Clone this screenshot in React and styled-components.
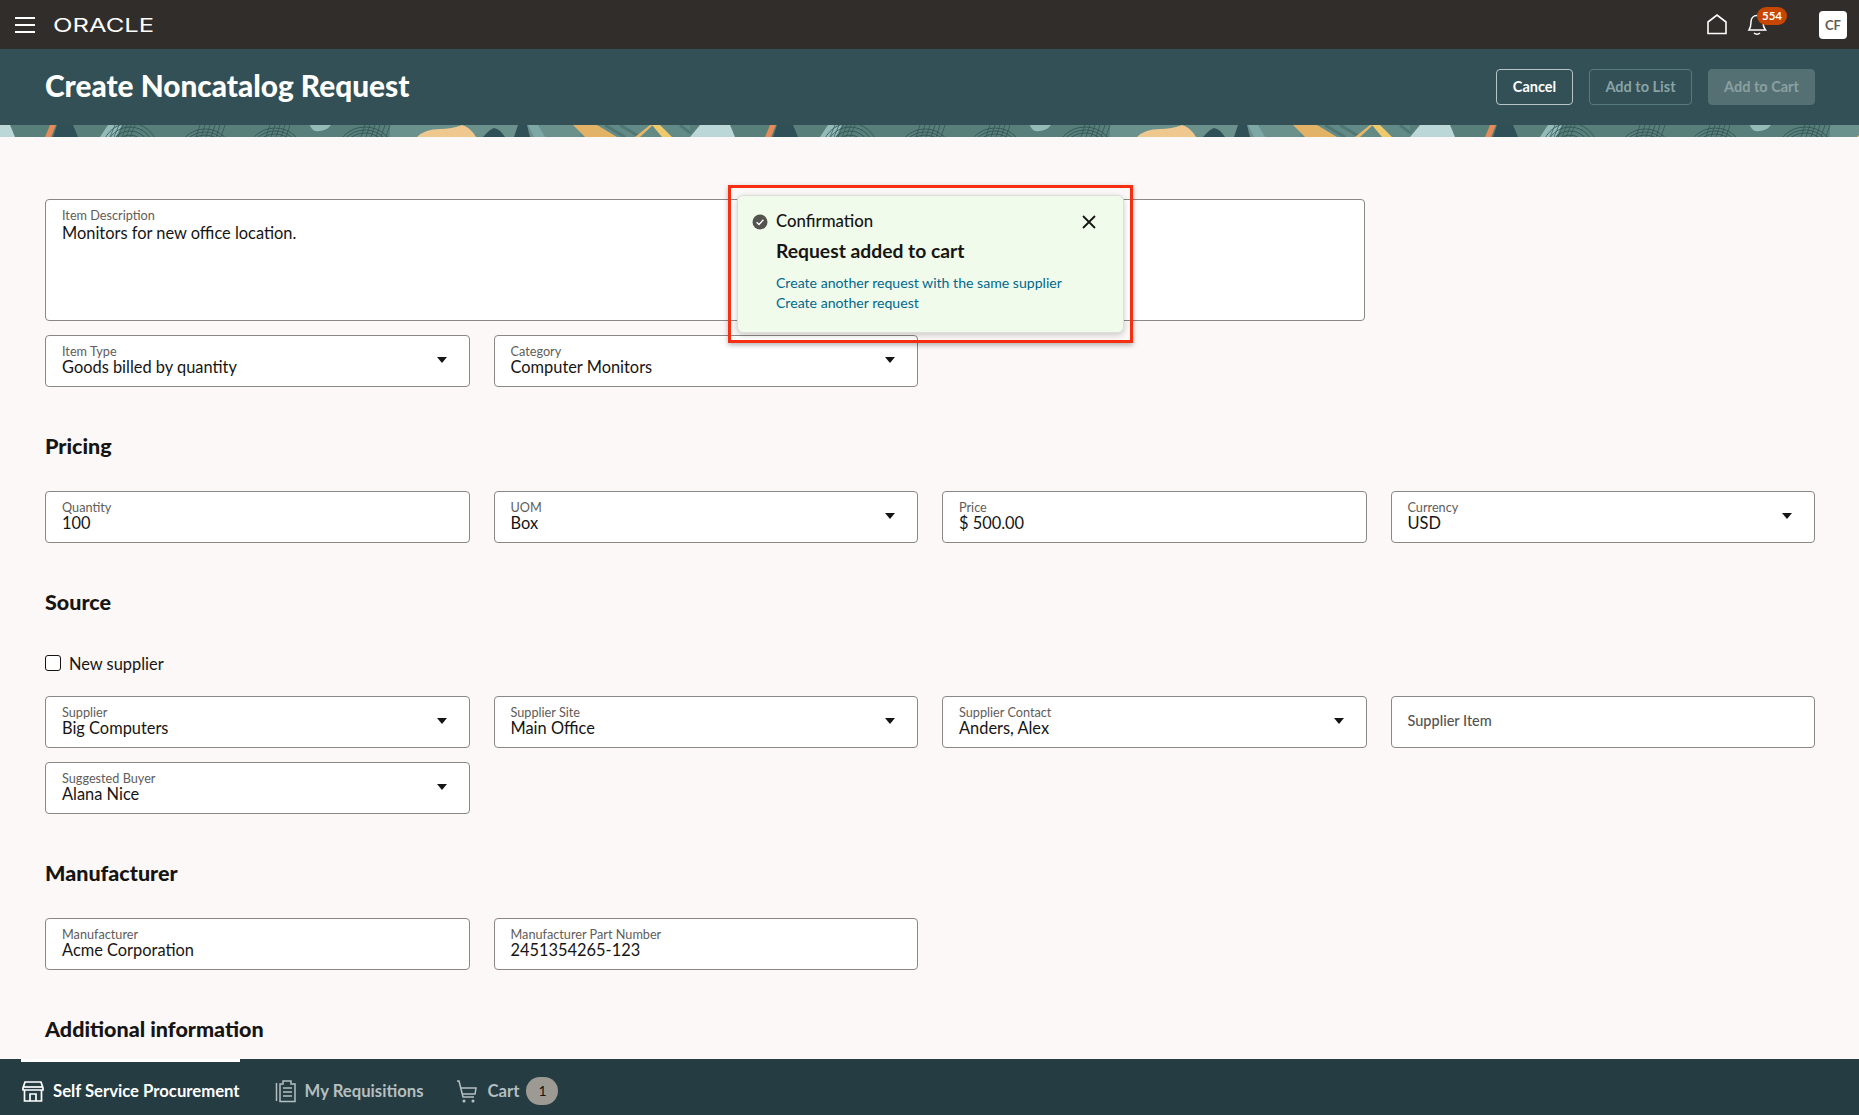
import React from 'react';
import styled, { createGlobalStyle } from 'styled-components';

const GlobalStyle = createGlobalStyle`
    html, body {
        margin: 0;
        padding: 0;
        height: 100%;
        background: #fcf8f7;
    }
    * {
        box-sizing: border-box;
    }
    body {
        font-family: 'Lato', 'Noto Sans', sans-serif;
        color: #161513;
    }
`;

const Page = styled.div`
    position: relative;
    display: flex;
    flex-direction: column;
    height: 100vh;
    overflow: hidden;
`;

const TopBar = styled.header`
    display: flex;
    align-items: center;
    justify-content: space-between;
    flex: none;
    height: 49px;
    padding: 0 12px 0 15px;
    background: #312d2a;
`;

const TopLeft = styled.div`
    display: flex;
    align-items: center;
    gap: 18px;
`;

const TopRight = styled.div`
    display: flex;
    align-items: center;
`;

const Hamburger = styled.div`
    display: flex;
    flex-direction: column;
    gap: 5px;
    width: 20px;

    span {
        display: block;
        height: 2px;
        background: #fff;
    }
`;

const Logo = styled.span`
    display: inline-block;
    width: 100px;
    font-family: 'Inter', sans-serif;
    font-size: 18.5px;
    font-weight: 400;
    line-height: 18px;
    color: #fff;
    transform: scaleX(1.38);
    transform-origin: left center;
`;

const IconBox = styled.div`
    position: relative;
    display: flex;
    align-items: center;
    justify-content: center;
    width: 24px;
    height: 24px;
    margin-top: -2px;
    margin-right: ${(p) => p.$gap}px;
`;

const Badge = styled.span`
    position: absolute;
    top: -5px;
    left: 12px;
    width: 30px;
    height: 18px;
    border-radius: 9px;
    background: #c74600;
    color: #fff;
    font-size: 11.5px;
    font-weight: 700;
    line-height: 18px;
    text-align: center;
`;

const Avatar = styled.div`
    width: 28px;
    height: 28px;
    border-radius: 4px;
    background: #fff;
    color: #5f5b57;
    font-size: 13px;
    font-weight: 700;
    line-height: 28px;
    text-align: center;
`;

const TitleBar = styled.div`
    display: flex;
    align-items: center;
    justify-content: space-between;
    flex: none;
    height: 76px;
    padding: 0 44px 0 45px;
    background: #325056;
`;

const Title = styled.h1`
    margin: 0 0 3px;
    font-size: 29.8px;
    font-weight: 900;
    color: #fff;
`;

const Actions = styled.div`
    display: flex;
    gap: 16px;
`;

const ActionButton = styled.button`
    height: 36px;
    padding: 0 0 2px;
    width: ${(p) => p.$width}px;
    border-radius: 4px;
    border: 1px solid ${(p) => p.$border};
    background: ${(p) => p.$bg};
    color: ${(p) => p.$color};
    font-family: inherit;
    font-size: 14.5px;
    font-weight: 700;
`;

const BannerArt = styled.svg`
    display: block;
    flex: none;
    width: 100%;
    height: 12px;
`;

const Main = styled.main`
    flex: 1;
    min-height: 0;
    overflow: hidden;
    padding: 62px 44px 0 45px;
`;

const FieldGrid = styled.div`
    display: grid;
    grid-template-columns: repeat(4, minmax(0, 1fr));
    gap: 14px 24px;
`;

const FieldBox = styled.div`
    position: relative;
    grid-column: span ${(p) => p.$span || 1};
    height: ${(p) => p.$height || 52}px;
    margin-right: ${(p) => (p.$span ? 2 : 0)}px;
    padding: 9px 16px 0;
    border: 1px solid #8a8785;
    border-radius: 4px;
    background: #fff;
`;

const FieldLabel = styled.div`
    font-size: 12.7px;
    line-height: 13px;
    color: #5f5c59;
`;

const FieldValue = styled.div`
    margin-top: ${(p) => p.$gap || 0}px;
    font-size: 16.4px;
    line-height: 18px;
    color: #161513;
`;

const EmptyLabel = styled.div`
    font-size: 14.5px;
    font-weight: 500;
    line-height: 30px;
    color: #55524f;
`;

const Caret = styled.span`
    position: absolute;
    top: 21px;
    right: 22px;
    width: 0;
    height: 0;
    border-left: 5.5px solid transparent;
    border-right: 5.5px solid transparent;
    border-top: 6px solid #161513;
`;

const SectionTitle = styled.h2`
    margin: 47px 0 ${(p) => (p.$tight ? 0 : 33)}px;
    font-size: 21.5px;
    font-weight: 900;
    line-height: 24px;
`;

const CheckRow = styled.label`
    display: flex;
    align-items: center;
    gap: 8px;
    height: 20px;
    margin: 39px 0 23px;
    font-size: 16.4px;
`;

const CheckBox = styled.span`
    width: 16px;
    height: 16px;
    border: 1.5px solid #161513;
    border-radius: 3px;
    background: #fff;
`;

const BottomBar = styled.nav`
    position: relative;
    display: flex;
    align-items: center;
    flex: none;
    height: 56px;
    padding: 8px 0 0 21px;
    background: #253c42;
`;

const Tab = styled.div`
    position: relative;
    display: flex;
    align-items: center;
    gap: 8px;
    margin-right: ${(p) => p.$gap}px;
    font-size: 16.7px;
    font-weight: 700;
    color: ${(p) => (p.$active ? '#fff' : '#b5bfc0')};

    &::before {
        content: ${(p) => (p.$active ? "''" : 'none')};
        position: absolute;
        top: -20px;
        left: 0;
        right: 0;
        height: 3px;
        background: #fff;
    }
`;

const CartCount = styled.span`
    width: 32px;
    height: 28px;
    margin-left: -1px;
    border-radius: 14px;
    background: #9c9a93;
    color: #161513;
    font-size: 14px;
    font-weight: 400;
    line-height: 28px;
    text-align: center;
`;

const RedFrame = styled.div`
    position: absolute;
    top: 185px;
    left: 728px;
    width: 405px;
    height: 158px;
    padding: 7px 6px;
    border: 3px solid #f62e12;
    box-shadow: 0 2px 5px rgba(0, 0, 0, 0.3);
`;

const Toast = styled.div`
    position: relative;
    height: 100%;
    padding: 16px 0 0 38px;
    border: 1px solid #dcdfd8;
    border-radius: 6px;
    background: #f1fbeb;
    box-shadow: 0 2px 6px rgba(0, 0, 0, 0.2);
`;

const ToastIcon = styled.svg`
    position: absolute;
    top: 18px;
    left: 14px;
    width: 16px;
    height: 16px;
`;

const ToastClose = styled.svg`
    position: absolute;
    top: 18px;
    right: 26px;
    width: 16px;
    height: 16px;
`;

const ToastKind = styled.div`
    font-size: 16.8px;
    font-weight: 500;
    line-height: 18px;
`;

const ToastTitle = styled.div`
    margin: 10px 0 11px;
    font-size: 19.3px;
    font-weight: 700;
    line-height: 22px;
`;

const ToastLink = styled.a`
    display: block;
    color: #00688c;
    font-size: 14.1px;
    line-height: 20px;
`;

const Field = ({ label, value, select, span, height, valueGap }) => (
    <FieldBox $span={span} $height={height}>
        {value ? (
            <>
                <FieldLabel>{label}</FieldLabel>
                <FieldValue $gap={valueGap}>{value}</FieldValue>
            </>
        ) : (
            <EmptyLabel>{label}</EmptyLabel>
        )}
        {select && <Caret />}
    </FieldBox>
);

const Banner = () => (
    <BannerArt aria-hidden="true">
        <defs>
            <pattern id="art" width="720" height="12" patternUnits="userSpaceOnUse">
                <rect width="720" height="12" fill="#587f79" />
                <rect x="390" width="190" height="12" fill="#6a918c" />
                <rect x="580" width="110" height="12" fill="#628a86" />
                <polygon points="0,0 10,0 15,12 0,12" fill="#bcd7d8" />
                <polygon points="700,0 720,0 720,12 690,12" fill="#bcd7d8" />
                <polygon points="50,0 56,0 51,12 45,12" fill="#e58b57" />
                <polygon points="57,0 73,0 78,12 53,12" fill="#2f5057" />
                <polygon points="108,0 122,0 116,12 100,12" fill="#93bcb9" />
                <path d="M310 0 H331 Q326 7 315 6 Q311 4 310 0Z" fill="#93bcb9" />
                <g fill="none" stroke="#2e4f51" strokeWidth="0.8">
                    <circle cx="130" cy="26" r="16" />
                    <circle cx="130" cy="26" r="20" />
                    <circle cx="130" cy="26" r="24" />
                    <circle cx="130" cy="26" r="28" />
                    <circle cx="205" cy="32" r="22" />
                    <circle cx="205" cy="32" r="25" />
                    <circle cx="205" cy="32" r="28" />
                    <circle cx="275" cy="32" r="23" />
                    <circle cx="275" cy="32" r="26" />
                    <circle cx="275" cy="32" r="29" />
                    <circle cx="365" cy="32" r="24" />
                    <circle cx="365" cy="32" r="27" />
                    <circle cx="365" cy="32" r="30" />
                </g>
                <g stroke="#2e4f51" strokeWidth="0.7">
                    <path d="M115 0 L110 12 M119 0 L114 12 M123 0 L118 12 M127 0 L122 12 M131 0 L126 12 M135 0 L130 12" />
                    <path d="M200 0 L196 12 M205 0 L201 12 M210 0 L206 12 M215 0 L211 12 M220 0 L216 12 M225 0 L221 12" />
                    <path d="M270 0 L266 12 M275 0 L271 12 M280 0 L276 12 M285 0 L281 12 M290 0 L286 12" />
                    <path d="M365 0 L361 12 M370 0 L366 12 M375 0 L371 12 M380 0 L376 12 M385 0 L381 12 M390 0 L386 12" />
                </g>
                <path d="M417 12 Q425 4 440 4 Q452 4 462 0 Q470 2 476 12Z" fill="#efc88f" />
                <path d="M483 12 Q490 4 494 3 Q500 4 505 12Z" fill="#2f5057" />
                <polygon points="518,0 527,0 530,12 514,12" fill="#2f5057" />
                <polygon points="528,0 538,0 545,12 534,12" fill="#7ea8a6" />
                <polygon points="573,0 597,0 617,12 585,12" fill="#e2b266" />
                <path d="M605 0 L625 12 M620 0 L640 12 M680 0 L690 8" stroke="#4f7773" strokeWidth="3" />
                <polygon points="650,0 653,0 640,12 635,12" fill="#e8b566" />
                <polygon points="652,0 660,0 672,12 662,12" fill="#f0c96a" />
            </pattern>
        </defs>
        <rect width="100%" height="12" fill="url(#art)" />
    </BannerArt>
);

const App = () => (
    <Page>
        <GlobalStyle />
        <TopBar>
            <TopLeft>
                <Hamburger>
                    <span />
                    <span />
                    <span />
                </Hamburger>
                <Logo>ORACLE</Logo>
            </TopLeft>
            <TopRight>
                <IconBox $gap={16}>
                    <svg width="22" height="22" viewBox="0 0 22 22" fill="none" stroke="#fff" strokeWidth="1.6">
                        <path d="M2 20.5 V9 L11 2 L20 9 V20.5 Z" />
                    </svg>
                </IconBox>
                <IconBox $gap={50}>
                    <svg width="22" height="24" viewBox="0 0 22 24" fill="none" stroke="#fff" strokeWidth="1.5">
                        <path d="M3 18 C5 15 5 13 5 10 C5 6 7.5 3.5 11 3.5 C14.5 3.5 17 6 17 10 C17 13 17 15 19.5 18 Z" />
                        <path d="M8 21 C9.5 22.5 12.5 22.5 14 21" />
                    </svg>
                    <Badge>554</Badge>
                </IconBox>
                <Avatar>CF</Avatar>
            </TopRight>
        </TopBar>
        <TitleBar>
            <Title>Create Noncatalog Request</Title>
            <Actions>
                <ActionButton $width={77} $border="#b9c5c5" $bg="transparent" $color="#fff">Cancel</ActionButton>
                <ActionButton $width={103} $border="#567a7b" $bg="transparent" $color="#8aa3a4">Add to List</ActionButton>
                <ActionButton $width={107} $border="#557073" $bg="#557073" $color="#8ba0a2">Add to Cart</ActionButton>
            </Actions>
        </TitleBar>
        <Banner />
        <Main>
            <FieldGrid>
                <Field label="Item Description" value="Monitors for new office location." span={3} height={122} valueGap={2} />
                <div />
                <Field label="Item Type" value="Goods billed by quantity" select />
                <Field label="Category" value="Computer Monitors" select />
            </FieldGrid>

            <SectionTitle>Pricing</SectionTitle>
            <FieldGrid>
                <Field label="Quantity" value="100" />
                <Field label="UOM" value="Box" select />
                <Field label="Price" value="$ 500.00" />
                <Field label="Currency" value="USD" select />
            </FieldGrid>

            <SectionTitle $tight>Source</SectionTitle>
            <CheckRow>
                <CheckBox />
                New supplier
            </CheckRow>
            <FieldGrid>
                <Field label="Supplier" value="Big Computers" select />
                <Field label="Supplier Site" value="Main Office" select />
                <Field label="Supplier Contact" value="Anders, Alex" select />
                <Field label="Supplier Item" />
                <Field label="Suggested Buyer" value="Alana Nice" select />
            </FieldGrid>

            <SectionTitle>Manufacturer</SectionTitle>
            <FieldGrid>
                <Field label="Manufacturer" value="Acme Corporation" />
                <Field label="Manufacturer Part Number" value="2451354265-123" />
            </FieldGrid>

            <SectionTitle>Additional information</SectionTitle>
        </Main>
        <BottomBar>
            <Tab $active $gap={35}>
                <svg width="24" height="24" viewBox="0 0 24 24" fill="none" stroke="#fff" strokeWidth="1.7">
                    <path d="M4 3 H20 L22 9 V11 H2 V9 Z" />
                    <path d="M2 8 H22" />
                    <path d="M3.5 11 V22 H20.5 V11" />
                    <path d="M9 22 V15 H15 V22" />
                </svg>
                Self Service Procurement
            </Tab>
            <Tab $gap={32}>
                <svg width="22" height="24" viewBox="0 0 22 24" fill="none" stroke="#b5bfc0" strokeWidth="1.5">
                    <path d="M1.5 4 V22" />
                    <path d="M5 5 H8 V2 H16 V5 H20 V22.5 H5 Z" />
                    <path d="M8 9 H17 M8 13 H17 M8 17 H17" />
                </svg>
                My Requisitions
            </Tab>
            <Tab $gap={0}>
                <svg width="24" height="24" viewBox="0 0 24 24" fill="none" stroke="#b5bfc0" strokeWidth="1.5">
                    <path d="M2 2 H4 L8 18 H19" />
                    <path d="M5.5 9 H21 L20 15 H7" />
                    <circle cx="9" cy="22" r="0.8" />
                    <circle cx="18" cy="22" r="0.8" />
                </svg>
                Cart
                <CartCount>1</CartCount>
            </Tab>
        </BottomBar>
        <RedFrame>
            <Toast>
                <ToastIcon viewBox="0 0 16 16">
                    <circle cx="8" cy="8" r="7.5" fill="#55534e" />
                    <path d="M4.6 8.2 L7 10.4 L11.4 5.8" fill="none" stroke="#fff" strokeWidth="1.4" />
                </ToastIcon>
                <ToastClose viewBox="0 0 16 16" fill="none" stroke="#161513" strokeWidth="1.8">
                    <path d="M2 2 L14 14 M14 2 L2 14" />
                </ToastClose>
                <ToastKind>Confirmation</ToastKind>
                <ToastTitle>Request added to cart</ToastTitle>
                <ToastLink>Create another request with the same supplier</ToastLink>
                <ToastLink>Create another request</ToastLink>
            </Toast>
        </RedFrame>
    </Page>
);

export default App;
